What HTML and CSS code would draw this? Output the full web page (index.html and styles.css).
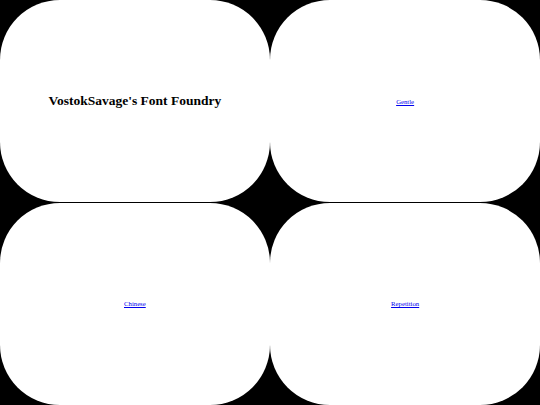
FILE: index.html
```html
<!DOCTYPE html>
<html>
<head>
<meta charset="utf-8">
<title>VostokSavage's Font Foundry</title>
<link rel="stylesheet" href="styles.css">
</head>
<body>
<div class="grid">
  <div class="tile"><h1 class="title">VostokSavage's Font Foundry</h1></div>
  <div class="tile"><a class="link" href="#gentle">Gentle</a></div>
  <div class="tile"><a class="link" href="#chinese">Chinese</a></div>
  <div class="tile"><a class="link" href="#repetition">Repetition</a></div>
</div>
</body>
</html>
```

FILE: styles.css
```css
html, body {
  margin: 0;
  padding: 0;
  background: #000;
}
.grid {
  display: grid;
  grid-template-columns: 1fr 1fr;
  grid-template-rows: 1fr 1fr;
  gap: 0.5px;
  width: 540px;
  height: 405px;
}
.tile {
  background: #fff;
  border-radius: 60px;
  display: flex;
  align-items: center;
  justify-content: center;
  font-family: "Liberation Serif", "Times New Roman", serif;
}
.title {
  margin: 0;
  font-size: 13.5px;
  font-weight: bold;
  color: #000;
}
.link {
  font-size: 6.75px;
  color: #0000ee;
  text-decoration: underline;
}
```
